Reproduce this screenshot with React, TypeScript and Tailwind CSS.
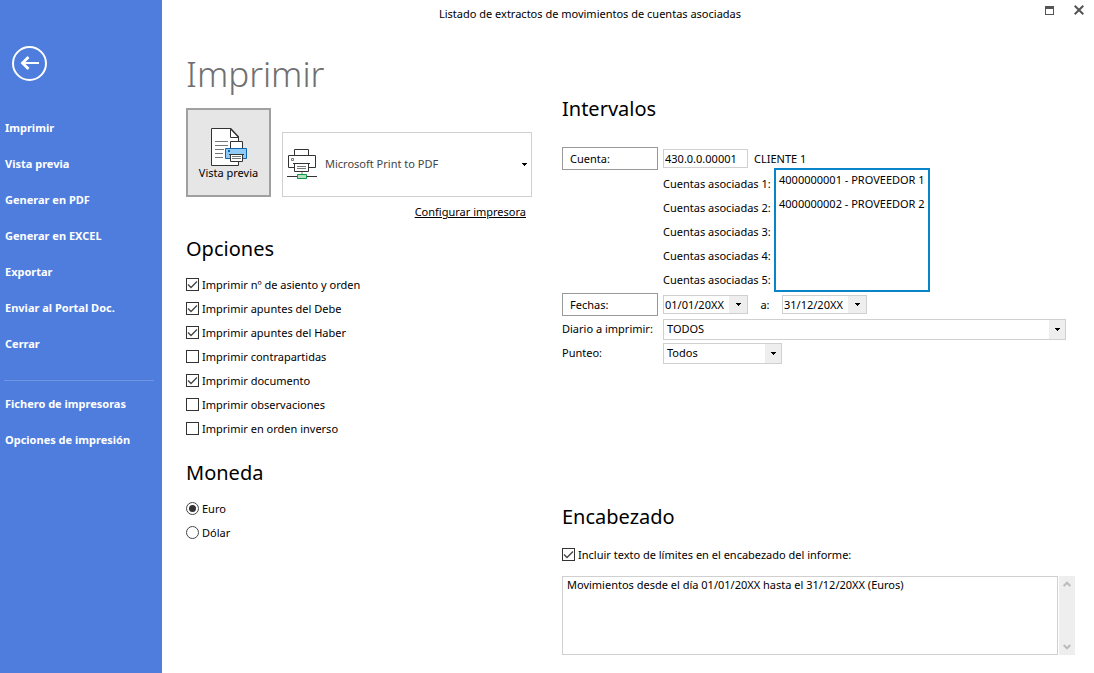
import { useState, type ReactNode } from "react";

const menu = [
  "Imprimir",
  "Vista previa",
  "Generar en PDF",
  "Generar en EXCEL",
  "Exportar",
  "Enviar al Portal Doc.",
  "Cerrar",
];
const settings = ["Fichero de impresoras", "Opciones de impresión"];

const options: [string, boolean][] = [
  ["Imprimir nº de asiento y orden", true],
  ["Imprimir apuntes del Debe", true],
  ["Imprimir apuntes del Haber", true],
  ["Imprimir contrapartidas", false],
  ["Imprimir documento", true],
  ["Imprimir observaciones", false],
  ["Imprimir en orden inverso", false],
];

const accounts = ["4000000001 - PROVEEDOR 1", "4000000002 - PROVEEDOR 2"];

function MenuLink({ children }: { children: ReactNode }) {
  return (
    <li>
      <a href="#" className="block h-9 pl-[5px] leading-[34px] font-bold text-white">
        {children}
      </a>
    </li>
  );
}

function Heading({ children }: { children: ReactNode }) {
  return <h2 className="text-[20px] leading-[34px]">{children}</h2>;
}

function Check({ label, checked }: { label: string; checked: boolean }) {
  return (
    <label className="flex h-6 items-start gap-[3px] leading-6">
      <span className="relative mt-[5px] flex size-[13px]">
        <input
          type="checkbox"
          defaultChecked={checked}
          className="peer size-[13px] appearance-none border border-[#333] bg-white"
        />
        <svg
          viewBox="0 0 13 13"
          className="pointer-events-none absolute inset-0 hidden peer-checked:block"
          fill="none"
          stroke="#444"
          strokeWidth="1.3"
        >
          <path d="M2 6.5 5 9.5 11 3.5" />
        </svg>
      </span>
      {label}
    </label>
  );
}

function Radio({ label, checked }: { label: string; checked: boolean }) {
  return (
    <label className="flex h-6 items-start gap-[3px] leading-6">
      <span className="relative mt-[5px] flex size-[13px]">
        <input
          type="radio"
          name="moneda"
          defaultChecked={checked}
          className="peer size-[13px] appearance-none rounded-full border border-[#444] bg-white"
        />
        <span className="pointer-events-none absolute inset-[3px] hidden rounded-full bg-[#333] peer-checked:block" />
      </span>
      {label}
    </label>
  );
}

function Arrow() {
  return (
    <svg width="5" height="3" viewBox="0 0 5 3" shapeRendering="crispEdges">
      <path d="M0 0h5v1h-1v1h-1v1h-1v-1h-1v-1h-1z" fill="#000" />
    </svg>
  );
}

function Select({ id, value, className }: { id: string; value: string; className: string }) {
  return (
    <span className={"relative flex h-[21px] " + className}>
      <select
        id={id}
        className="h-full w-full appearance-none border border-[#d0d0d0] bg-white pl-[3px] leading-4"
      >
        <option>{value}</option>
      </select>
      <span className="pointer-events-none absolute inset-y-px right-px flex w-4 items-center justify-center bg-[#eee]">
        <Arrow />
      </span>
    </span>
  );
}

function DateField({ label, value }: { label: string; value: string }) {
  return (
    <span className="flex h-[19px] w-[85px] border border-[#d0d0d0]">
      <input aria-label={label} defaultValue={value} className="w-0 flex-1 pl-px leading-4" />
      <button aria-label={"Abrir " + label} className="flex w-[18px] items-center justify-center bg-[#eee]">
        <Arrow />
      </button>
    </span>
  );
}

function PreviewIcon() {
  return (
    <svg width="38" height="40" viewBox="0 0 38 40" fill="none" strokeWidth="1">
      <path d="M1.5 1.5H20.5L28.5 10V38.5H1.5Z" fill="#fff" stroke="#333" />
      <path d="M20.5 1.5V10.5H28.5" stroke="#333" />
      <path d="M20.5 1.5 28.5 10" stroke="#333" strokeWidth="1.5" />
      <path d="M5 14.5H18M5 18.5H18M5 22.5H14M5 26.5H13M5 30.5H13" stroke="#777" />
      <path d="M20.5 14.5H32.5V22.5H20.5Z" fill="#fff" stroke="#333" />
      <path d="M15.5 21.5H36.5V31.5H15.5Z" fill="#91c9f7" stroke="#1065b1" />
      <path d="M18 23h2v2h-2z" fill="#1065b1" />
      <path d="M20.5 27.5H32.5V34.5H20.5Z" fill="#fff" stroke="#333" />
      <path d="M19 27.5H34" stroke="#333" />
      <path d="M22 29.5H31M22 31.5H31" stroke="#777" />
    </svg>
  );
}

function PrinterIcon() {
  return (
    <svg
      width="31"
      height="32"
      viewBox="0 0 31 32"
      fill="none"
      className="pointer-events-none absolute top-4 left-[5px]"
    >
      <path d="M7.5 7.5V1.5H21.5V7.5" stroke="#333" />
      <path d="M7.5 19.5H1.5V7.5H28.5V19.5H21.5" stroke="#333" />
      <path d="M4.5 10.5h2v2h-2z" stroke="#777" />
      <path d="M6 15.5H23M7.5 15.5V23.5H21.5V15.5" stroke="#333" />
      <path d="M10 18.5H19M10 20.5H19" stroke="#777" />
      <path d="M14 24h2v2h-2z" fill="#bbb" />
      <path d="M0 28.5H30" stroke="#333" />
      <path d="M10.5 26.5H19.5V30.5H10.5Z" fill="#b5dfc0" stroke="#0d9a48" />
    </svg>
  );
}

function Chevron({ down }: { down?: boolean }) {
  return (
    <svg width="8" height="6" viewBox="0 0 8 6" fill="none" stroke="#bbb" strokeWidth="2">
      <path d={down ? "M.7 1 4 4.3 7.3 1" : "M.7 5 4 1.7 7.3 5"} />
    </svg>
  );
}

export default function App() {
  const [text, setText] = useState("Movimientos desde el día 01/01/20XX hasta el 31/12/20XX (Euros)");

  return (
    <div className="flex min-h-screen bg-white font-['Noto_Sans',sans-serif] text-[11px] leading-4 text-black">
      <nav className="w-[162px] shrink-0 bg-[#4e7ddd] pt-[45px]">
        <button aria-label="Volver" className="ml-[11px] block">
          <svg width="37" height="37" viewBox="0 0 37 37" fill="none" stroke="#fff" strokeWidth="2">
            <circle cx="18.5" cy="18.5" r="16.5" />
            <path d="M11 18H28" />
            <path d="M17.5 12 11.5 18 17.5 24" strokeWidth="2.8" />
          </svg>
        </button>
        <ul className="mt-[29px]">
          {menu.map((m) => (
            <MenuLink key={m}>{m}</MenuLink>
          ))}
        </ul>
        <hr className="mx-1 mt-[17px] mr-2 border-[#7295e3]" />
        <ul className="mt-[6px]">
          {settings.map((m) => (
            <MenuLink key={m}>{m}</MenuLink>
          ))}
        </ul>
      </nav>

      <div className="flex min-w-0 flex-1 flex-col">
        <header className="flex h-7 items-center">
          <p className="flex-1 text-center">Listado de extractos de movimientos de cuentas asociadas</p>
          <div className="flex w-[76px] items-center gap-5 pb-2 pl-[27px]">
            <button aria-label="Maximizar">
              <svg width="9" height="9" viewBox="0 0 9 9" fill="none" stroke="#555" shapeRendering="crispEdges">
                <path d="M.5 .5H8.5V8.5H.5ZM0 1.5H9M0 2.5H9" />
              </svg>
            </button>
            <button aria-label="Cerrar">
              <svg width="10" height="10" viewBox="0 0 10 10" fill="none" stroke="#555" strokeWidth="2">
                <path d="M.7 .7 9.3 9.3M9.3 .7 .7 9.3" />
              </svg>
            </button>
          </div>
        </header>

        <main className="grid gap-x-[30px] pr-[19px] pl-6 lg:grid-cols-[346px_1fr]">
          <div>
            <h1 className="mt-[18px] text-[35px] leading-[56px] font-light text-[#707070]">Imprimir</h1>
            <div className="mt-[6px] flex items-end gap-[11px]">
              <button className="flex h-[89px] w-[85px] shrink-0 flex-col items-center border-2 border-[#a0a0a0] bg-[#e6e6e6] pt-[17px]">
                <PreviewIcon />
                <span className="-mt-0.5">Vista previa</span>
              </button>
              <div className="relative h-[65px] flex-1">
                <select
                  aria-label="Impresora"
                  className="h-full w-full appearance-none border border-[#d0d0d0] bg-white pb-0.5 pl-[42px] text-[#444]"
                >
                  <option>Microsoft Print to PDF</option>
                </select>
                <PrinterIcon />
                <span className="pointer-events-none absolute inset-y-0 right-[5px] flex items-center">
                  <Arrow />
                </span>
              </div>
            </div>
            <div className="mt-[7px] flex justify-end pr-[6px]">
              <a href="#" className="underline">
                Configurar impresora
              </a>
            </div>

            <section className="mt-3">
              <Heading>Opciones</Heading>
              <div className="mt-[7px]">
                {options.map(([label, checked]) => (
                  <Check key={label} label={label} checked={checked} />
                ))}
              </div>
            </section>

            <section className="mt-[15px]">
              <Heading>Moneda</Heading>
              <div className="mt-[7px]">
                <Radio label="Euro" checked />
                <Radio label="Dólar" checked={false} />
              </div>
            </section>
          </div>

          <div>
            <section className="mt-16">
              <Heading>Intervalos</Heading>
              <div className="mt-5 flex h-[26px] items-center gap-[5px] pb-px">
                <button className="h-[23px] w-24 shrink-0 border border-[#999] bg-white pl-[7px] text-left">
                  Cuenta:
                </button>
                <input
                  aria-label="Cuenta"
                  defaultValue="430.0.0.00001"
                  className="h-[19px] w-[85px] border border-[#d0d0d0] pl-px leading-4"
                />
                <span className="pl-px">CLIENTE 1</span>
              </div>
              <div className="flex items-end pl-[101px]">
                <ul className="w-[111px]">
                  {[1, 2, 3, 4, 5].map((n) => (
                    <li key={n} className="flex h-6 items-center whitespace-nowrap">
                      Cuentas asociadas {n}:
                    </li>
                  ))}
                </ul>
                <ul className="-mt-1 flex h-[124px] w-[156px] flex-col gap-1 border-2 border-[#0a84c8] pl-[3px]">
                  {accounts.map((a) => (
                    <li key={a} className="flex h-5 items-center whitespace-nowrap">
                      {a}
                    </li>
                  ))}
                </ul>
              </div>
              <div className="flex h-[25px] items-center">
                <button className="mr-[5px] h-[23px] w-24 shrink-0 border border-[#999] bg-white pl-[7px] text-left">
                  Fechas:
                </button>
                <DateField label="Fecha inicial" value="01/01/20XX" />
                <span className="w-[34px] text-center">a:</span>
                <DateField label="Fecha final" value="31/12/20XX" />
              </div>
              <div className="flex h-6 items-center pr-[9px]">
                <label htmlFor="diario" className="w-[101px] shrink-0">
                  Diario a imprimir:
                </label>
                <Select id="diario" value="TODOS" className="flex-1" />
              </div>
              <div className="flex h-6 items-center">
                <label htmlFor="punteo" className="w-[101px] shrink-0">
                  Punteo:
                </label>
                <Select id="punteo" value="Todos" className="w-[119px]" />
              </div>
            </section>

            <section className="mt-[135px]">
              <Heading>Encabezado</Heading>
              <div className="mt-[9px]">
                <Check label="Incluir texto de límites en el encabezado del informe:" checked />
              </div>
              <div className="mt-[9px] flex h-[79px] gap-px">
                <textarea
                  aria-label="Texto del encabezado"
                  value={text}
                  onChange={(e) => setText(e.target.value)}
                  className="h-full min-w-0 flex-1 resize-none overflow-hidden border border-[#d0d0d0] pl-1 leading-4"
                />
                <div className="flex w-4 flex-col items-center justify-between bg-[#eee] py-[5px]">
                  <button aria-label="Subir">
                    <Chevron />
                  </button>
                  <button aria-label="Bajar">
                    <Chevron down />
                  </button>
                </div>
              </div>
            </section>
          </div>
        </main>
      </div>
    </div>
  );
}
